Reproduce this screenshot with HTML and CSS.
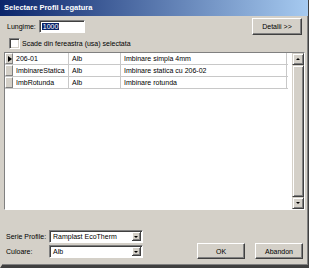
FILE: index.html
```html
<!doctype html>
<html>
  <head>
    <title>Selectare Profil Legatura</title>
    <link rel="stylesheet" href="styles.css">
  </head>
  <body>

    <div class="window">

      <!--Title bar-->
      <div class="titlebar">Selectare Profil Legatura</div>

      <div class="client">

        <div class="top-row">
          <span class="lbl">Lungime:</span>
          <div class="textbox"><span class="sel">1000</span></div>
          <div class="btn btn-details">Detalii &gt;&gt;</div>
        </div>

        <div class="check-row">
          <span class="checkbox"></span>
          <span class="lbl">Scade din fereastra (usa) selectata</span>
        </div>

        <!--Grid-->
        <div class="grid">
          <div class="rows">
            <div class="row">
              <div class="rowhead current"></div>
              <div class="cell c1">206-01</div>
              <div class="cell c2">Alb</div>
              <div class="cell c3">Imbinare simpla 4mm</div>
            </div>
            <div class="row">
              <div class="rowhead"></div>
              <div class="cell c1">ImbinareStatica</div>
              <div class="cell c2">Alb</div>
              <div class="cell c3">Imbinare statica cu 206-02</div>
            </div>
            <div class="row">
              <div class="rowhead"></div>
              <div class="cell c1">ImbRotunda</div>
              <div class="cell c2">Alb</div>
              <div class="cell c3">Imbinare rotunda</div>
            </div>
          </div>
          <div class="vscroll">
            <div class="sbtn up"></div>
            <div class="thumb"></div>
            <div class="sbtn down"></div>
          </div>
        </div>

        <!--Bottom fields and buttons-->
        <div class="bottom">
          <div class="fields">
            <div class="field">
              <span class="lbl">Serie Profile:</span>
              <div class="combo"><span class="combo-text">Ramplast EcoTherm</span><span class="drop"></span></div>
            </div>
            <div class="field">
              <span class="lbl">Culoare:</span>
              <div class="combo"><span class="combo-text">Alb</span><span class="drop"></span></div>
            </div>
          </div>
          <div class="buttons">
            <div class="btn">OK</div>
            <div class="btn">Abandon</div>
          </div>
        </div>

      </div>
    </div>

  </body>
</html>
```

FILE: styles.css
```css
body {
  margin:0;
  font-family: 'Liberation Sans', Arial, sans-serif;
  font-size:7px;
  color:#000;
}

.window {
  width:309px;
  height:268px;
  box-sizing:border-box;
  background:#d4d0c8;
  border-left:2px solid #d4d0c8;
  border-right:1px solid #404040;
  padding-right:2px;
  border-bottom:3px solid #404040;
  box-shadow: inset -1px -1px 0 #808080;
  display:flex;
  flex-direction:column;
}

.titlebar {
  height:16px;
  line-height:16px;
  margin-left:-2px;
  margin-right:-2px;
  padding-left:4px;
  background: linear-gradient(90deg, #0a246a 0%, #a6caf0 100%);
  color:#fff;
  font-weight:bold;
  font-size:7.5px;
}

.client {
  padding:0 1px 0 2px;
}

/* top row */
.top-row {
  margin-top:1px;
  height:18px;
  display:flex;
  align-items:center;
  padding-left:3px;
}
.textbox {
  margin-left:3px;
  width:46px;
  height:13px;
  box-sizing:border-box;
  background:#fff;
  border-top:1px solid #808080;
  border-left:1px solid #808080;
  border-right:1px solid #fff;
  border-bottom:1px solid #fff;
  box-shadow: inset 1px 1px 0 #404040;
  padding:2px 0 0 2px;
  line-height:8px;
}
.sel {
  background:#0a246a;
  color:#fff;
  padding:0 1px;
}

.btn {
  box-sizing:border-box;
  width:48px;
  height:16px;
  display:flex;
  align-items:center;
  justify-content:center;
  border-top:1px solid #fff;
  border-left:1px solid #fff;
  border-right:1px solid #404040;
  border-bottom:1px solid #404040;
  box-shadow: inset -1px -1px 0 #808080;
  background:#d4d0c8;
}
.btn-details {
  margin-left:auto;
  margin-right:3px;
  width:50px;
  height:17px;
}

/* checkbox */
.check-row {
  margin-top:3px;
  height:11px;
  display:flex;
  align-items:center;
  padding-left:5px;
}
.checkbox {
  width:11px;
  height:11px;
  box-sizing:border-box;
  background:#fff;
  border-top:1px solid #808080;
  border-left:1px solid #808080;
  border-right:1px solid #fff;
  border-bottom:1px solid #fff;
  box-shadow: inset 1px 1px 0 #404040, inset -1px -1px 0 #d4d0c8;
  margin-right:2px;
}

/* grid */
.grid {
  margin-top:3px;
  height:158px;
  box-sizing:border-box;
  background:#fff;
  border-top:1px solid #808080;
  border-left:1px solid #808080;
  border-right:1px solid #fff;
  border-bottom:1px solid #fff;
  display:flex;
}
.rows {
  width:283px;
}
.row {
  display:flex;
  height:12px;
  border-bottom:1px solid #c8c8c8;
  box-sizing:border-box;
}
.rowhead {
  width:8px;
  box-sizing:border-box;
  background:#d4d0c8;
  border-top:1px solid #fff;
  border-left:1px solid #fff;
  border-right:1px solid #808080;
  border-bottom:1px solid #808080;
  position:relative;
}
.rowhead.current::after {
  content:'';
  position:absolute;
  left:2px;
  top:2px;
  border-left:4px solid #000;
  border-top:3px solid transparent;
  border-bottom:3px solid transparent;
}
.cell {
  box-sizing:border-box;
  border-right:1px solid #c8c8c8;
  padding:0 0 0 3px;
  line-height:11px;
  white-space:nowrap;
  overflow:hidden;
}
.c1 { width:56px; }
.c2 { width:52px; }
.c3 { width:166px; }

.vscroll {
  margin-left:auto;
  width:12px;
  display:flex;
  flex-direction:column;
  background:#e8e6e2;
}
.sbtn, .thumb {
  box-sizing:border-box;
  background:#d4d0c8;
  border-top:1px solid #d4d0c8;
  border-left:1px solid #d4d0c8;
  border-right:1px solid #404040;
  border-bottom:1px solid #404040;
  box-shadow: inset 1px 1px 0 #fff, inset -1px -1px 0 #808080;
}
.sbtn {
  height:12px;
  position:relative;
}
.thumb {
  flex:1;
}
.sbtn::after {
  content:'';
  position:absolute;
  left:3px;
  border-left:2px solid transparent;
  border-right:2px solid transparent;
}
.sbtn.up::after {
  top:4px;
  border-bottom:2px solid #000;
}
.sbtn.down::after {
  top:4px;
  border-top:2px solid #000;
}

/* bottom */
.bottom {
  margin-top:20px;
  height:29px;
  display:flex;
  align-items:flex-end;
  padding-left:2px;
}
.fields {
  display:flex;
  flex-direction:column;
  gap:2px;
  margin-bottom:1px;
}
.field {
  display:flex;
  align-items:center;
  height:13px;
}
.field .lbl {
  width:43px;
}
.combo {
  width:94px;
  height:13px;
  box-sizing:border-box;
  background:#fff;
  border-top:1px solid #808080;
  border-left:1px solid #808080;
  border-right:1px solid #fff;
  border-bottom:1px solid #fff;
  box-shadow: inset 1px 1px 0 #404040;
  display:flex;
}
.combo-text {
  flex:1;
  padding:1px 0 0 3px;
  line-height:9px;
}
.drop {
  width:9px;
  margin:1px 1px 1px 0;
  box-sizing:border-box;
  background:#d4d0c8;
  border-right:1px solid #404040;
  border-bottom:1px solid #404040;
  box-shadow: inset 1px 1px 0 #fff, inset -1px -1px 0 #808080;
  position:relative;
}
.drop::after {
  content:'';
  position:absolute;
  left:2px;
  top:4px;
  border-left:2px solid transparent;
  border-right:2px solid transparent;
  border-top:2px solid #000;
}

.buttons {
  margin-left:auto;
  margin-right:2px;
  display:flex;
  gap:10px;
}
```
